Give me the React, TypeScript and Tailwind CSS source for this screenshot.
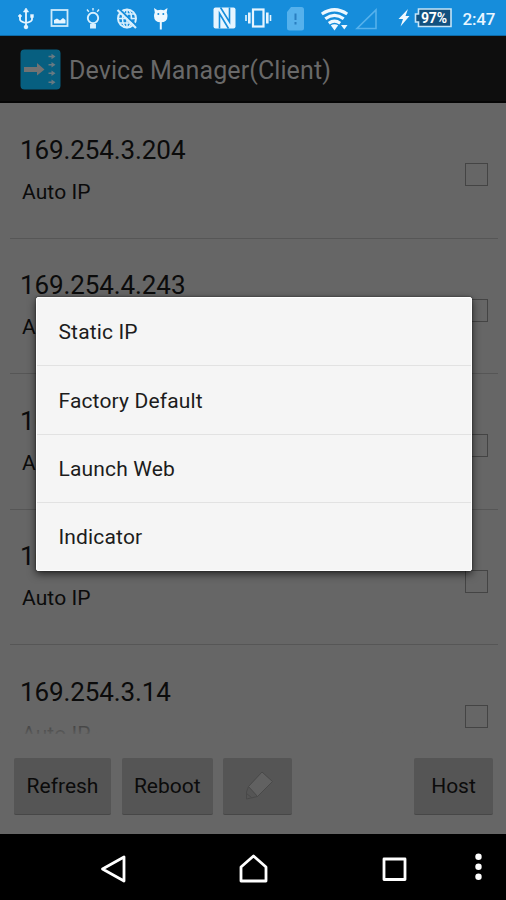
import type { ReactNode } from "react"

interface Device {
  ip: string
  mode: string
}

const devices: Device[] = [
  { ip: "169.254.3.204", mode: "Auto IP" },
  { ip: "169.254.4.243", mode: "Auto IP" },
  { ip: "169.254.3.18", mode: "Auto IP" },
  { ip: "169.254.3.22", mode: "Auto IP" },
  { ip: "169.254.3.14", mode: "Auto IP" },
]

const menuItems = ["Static IP", "Factory Default", "Launch Web", "Indicator"]

function StatusBar() {
  return (
    <div className="flex h-9 items-center bg-[#168ddb] shadow-[inset_0_-1px_0_#0d6aa6]">
      {/* Notification and system icons */}
      <svg width="506" height="36" viewBox="0 0 506 36" fill="none" className="block">
        {/* usb */}
        <g stroke="#e6f5ff" strokeWidth="1.8">
          <path d="M26 10v17M20 16v3.5q0 2 6 3.5M32 16v3.5q0 2-6 3.5" />
          <path d="M26 8l2.600 4h-5.200z" fill="#e6f5ff" strokeWidth="0.600" />
          <circle cx="20" cy="16" r="1.300" fill="#e6f5ff" strokeWidth="1" />
          <path d="M30.500 14.500h3v3h-3z" fill="#e6f5ff" strokeWidth="0.400" />
          <circle cx="26" cy="27" r="1.800" fill="#e6f5ff" strokeWidth="1" />
        </g>
        {/* picture */}
        <rect x="51.5" y="10" width="16" height="16" stroke="#cdeafb" strokeWidth="1.800" />
        <path d="M54 23.500v-3.500l3-1.500 3 2 3-2.500 2.500 2v3.500z" fill="#e6f5ff" />
        {/* lamp */}
        <g stroke="#d9f0fe" strokeWidth="1.900">
          <circle cx="93" cy="18" r="5.200" />
          <path d="M91 24v3.500h4V24" fill="#d9f0fe" />
          <path d="M93 8v2.500M87 9.500l1.800 2.200M99 9.500l-1.800 2.200" strokeWidth="1.400" />
        </g>
        {/* globe, struck out */}
        <g stroke="#d9f0fe" strokeWidth="2">
          <circle cx="127" cy="18.500" r="9" />
          <path d="M118 18.500h18M119.500 14h15M119.500 23h15M127 9.500v18" strokeWidth="1.500" />
          <ellipse cx="127" cy="18.500" rx="4.500" ry="9" strokeWidth="1.500" />
          <path d="M118.500 8.500l19 18" stroke="#168ddb" strokeWidth="2" />
          <path d="M117.500 10l18.500 18" strokeWidth="2.200" />
        </g>
        {/* android head */}
        <g fill="#eef8ff">
          <path d="M154 8l3.500 2.200q3.200-1 6.500 0L167.500 8l-.8 4.500q.8 1.500.8 3.500 0 6.300-6.700 6.300T154 16q0-2 .8-3.500z" />
          <path d="M159.800 22h2v7.500h-2z" />
          <circle cx="158.300" cy="14" r="1" fill="#168ddb" />
          <circle cx="163.300" cy="14" r="1" fill="#168ddb" />
        </g>
        {/* nfc */}
        <rect x="213.500" y="7.500" width="22" height="21" rx="2" fill="#e6f5ff" />
        <path d="M219.500 28.500V13.500l9 15M229.500 7.500V22l-9-14.500" stroke="#168ddb" strokeWidth="1.600" />
        {/* vibrate */}
        <g stroke="#e6f5ff">
          <rect x="253" y="9.500" width="10.500" height="17" strokeWidth="2.200" />
          <path d="M249.300 12.500v11M267.300 12.500v11" strokeWidth="2.600" />
          <path d="M246 15v6M270.500 15v6" strokeWidth="1.600" />
        </g>
        {/* sim missing */}
        <path d="M291 7h10.500q2.500 0 2.500 2.500v18.500q0 2.500-2.500 2.500h-12q-2.500 0-2.500-2.500V12z" fill="#55b1ec" />
        <path d="M295.500 13.500v6.500M295.500 22v2.500" stroke="#2a7fc0" strokeWidth="2" />
        {/* wifi */}
        <g stroke="#eef8ff" strokeWidth="3.200">
          <path d="M321.800 14q12.700-8.500 25.400 0" />
          <path d="M325.300 18.700q9.200-6.500 18.400 0" />
          <path d="M328.800 23.200q5.700-4 11.400 0" />
        </g>
        <path d="M330.800 25.300q3.700-2 7.400 0l-3.700 5.200z" fill="#eef8ff" />
        <path d="M341 25h6.500l-3.200 4.500z" fill="#eef8ff" />
        {/* mobile signal */}
        <path d="M357 28.500h19V10z" stroke="#55b1ec" strokeWidth="1.600" />
        {/* battery */}
        <path d="M408 9l-9.500 10h4.500l-2.500 7.500 9-10.500h-4z" fill="#f0f9ff" />
        <path d="M418.500 9h32.500v17.500h-32.500v-4.500h-3v-8h3z" fill="#12517f" stroke="#c3e4f8" strokeWidth="1.600" />
        <text
          x="434"
          y="23"
          textAnchor="middle"
          textLength="26"
          className="fill-white font-[Roboto,sans-serif] text-[14px] font-bold"
        >
          97%
        </text>
        <text x="462.500" y="25" textLength="33" className="fill-[#e9f6ff] font-[Roboto,sans-serif] text-[17px] font-medium">
          2:47
        </text>
      </svg>
    </div>
  )
}

function AppLogo() {
  return (
    <svg width="41" height="41" viewBox="0 0 41 41" className="shrink-0">
      <rect x=".5" y=".5" width="40" height="40" rx="4" fill="#075f80" />
      <path d="M4 18h13v-4l7.500 6.500-7.500 6v-3.500H4z" fill="#727272" />
      {[7.5, 15.8, 24.3, 33.3].map(y => (
        <path
          key={y}
          transform={`translate(0 ${y})`}
          d="M28.500 -.8h3v-2l4 2.800-4 2.800v-2h-3z"
          fill="#687a82"
        />
      ))}
    </svg>
  )
}

function DeviceRow({ device }: { device: Device }) {
  return (
    <div className="mr-[8px] ml-[10px] flex h-[135.5px] shrink-0 items-center justify-between border-b border-[#565656] pr-[10.5px] pl-[10px]">
      <div className="pb-[3px]">
        <p className="text-[26px] leading-[36px] tracking-[-0.1px] text-[#0b0b0b]">{device.ip}</p>
        <p className="mt-[10px] pl-[2px] text-[21px] leading-[28px] tracking-[0.1px] text-[#0b0b0b]">{device.mode}</p>
      </div>
      <div className="mt-[9px] size-[23px] border border-[#444]" />
    </div>
  )
}

function BarButton({ children, className }: { children: ReactNode; className: string }) {
  return (
    <button
      className={`flex h-[57px] items-center justify-center rounded-[2px] border-b border-[#474747] bg-[#555] text-[21px] text-[#0b0b0b] ${className}`}
    >
      {children}
    </button>
  )
}

function NavBar() {
  return (
    <div className="h-[66px] bg-black">
      <svg width="506" height="66" viewBox="0 0 506 66" fill="none" stroke="#fff" strokeWidth="2.800" strokeLinejoin="round">
        <path d="M102.500 35l21.500-12v24z" />
        <path d="M241 47V33l12.500-11L266 33v14z" />
        <rect x="384" y="25" width="21" height="20.500" />
        <g fill="#fff" stroke="none">
          <circle cx="478.500" cy="22.800" r="3.200" />
          <circle cx="478.500" cy="32.800" r="3.200" />
          <circle cx="478.500" cy="42.800" r="3.200" />
        </g>
      </svg>
    </div>
  )
}

export default function App() {
  return (
    <div className="relative flex h-[900px] w-[506px] flex-col overflow-hidden bg-[#666] font-[Roboto,sans-serif]">
      <StatusBar />

      {/* Title bar */}
      <div className="flex h-[67px] items-center gap-[8px] border-b-2 border-[#050505] bg-[#0e0e0e] pt-[2px] pl-5">
        <AppLogo />
        <h1 className="pt-[2px] text-[25px] tracking-[0.1px] text-[#696969]">Device Manager(Client)</h1>
      </div>

      {/* Device list */}
      <div className="relative flex h-[631px] flex-col overflow-hidden">
        {devices.map(device => (
          <DeviceRow key={device.ip} device={device} />
        ))}
        <div className="absolute bottom-0 left-0 h-[22px] w-[450px] bg-gradient-to-b from-[#666]/20 to-[#666]/90" />
      </div>

      {/* Actions */}
      <div className="flex h-[100px] items-start pt-[23.5px] pr-[13px] pl-[14px]">
        <BarButton className="w-[97px] pt-[3px]">Refresh</BarButton>
        <BarButton className="ml-[10.5px] w-[91.5px] pt-[3px]">Reboot</BarButton>
        <BarButton className="ml-[10px] w-[69px]">
          <svg width="30" height="30" viewBox="0 0 30 30" fill="#616161" stroke="#494949" strokeWidth="1" strokeLinejoin="round">
            <path d="M5.500 15.500L3.500 21v7l11-2.500" fill="none" />
            <path d="M3.500 22.500l5 4" />
            <path d="M19 1l10.500 9.500-15 15-9-10z" />
          </svg>
        </BarButton>
        <BarButton className="ml-auto w-[79px] pt-[3px]">Host</BarButton>
      </div>

      <NavBar />

      {/* Context menu */}
      <div className="absolute top-[297px] left-[36px] w-[436px] rounded-[2px] border border-white bg-[#f5f5f5] shadow-[0_3px_8px_rgba(0,0,0,0.65),0_0_2px_rgba(0,0,0,0.6)]">
        {menuItems.map(item => (
          <div
            key={item}
            className="flex h-[68.5px] items-center border-b border-[#e2e2e2] pt-[3px] pl-[21.5px] text-[21px] tracking-[0.15px] text-[#1c1c1c] first:h-[68px] last:h-[67px] last:border-b-0"
          >
            {item}
          </div>
        ))}
      </div>
    </div>
  )
}
